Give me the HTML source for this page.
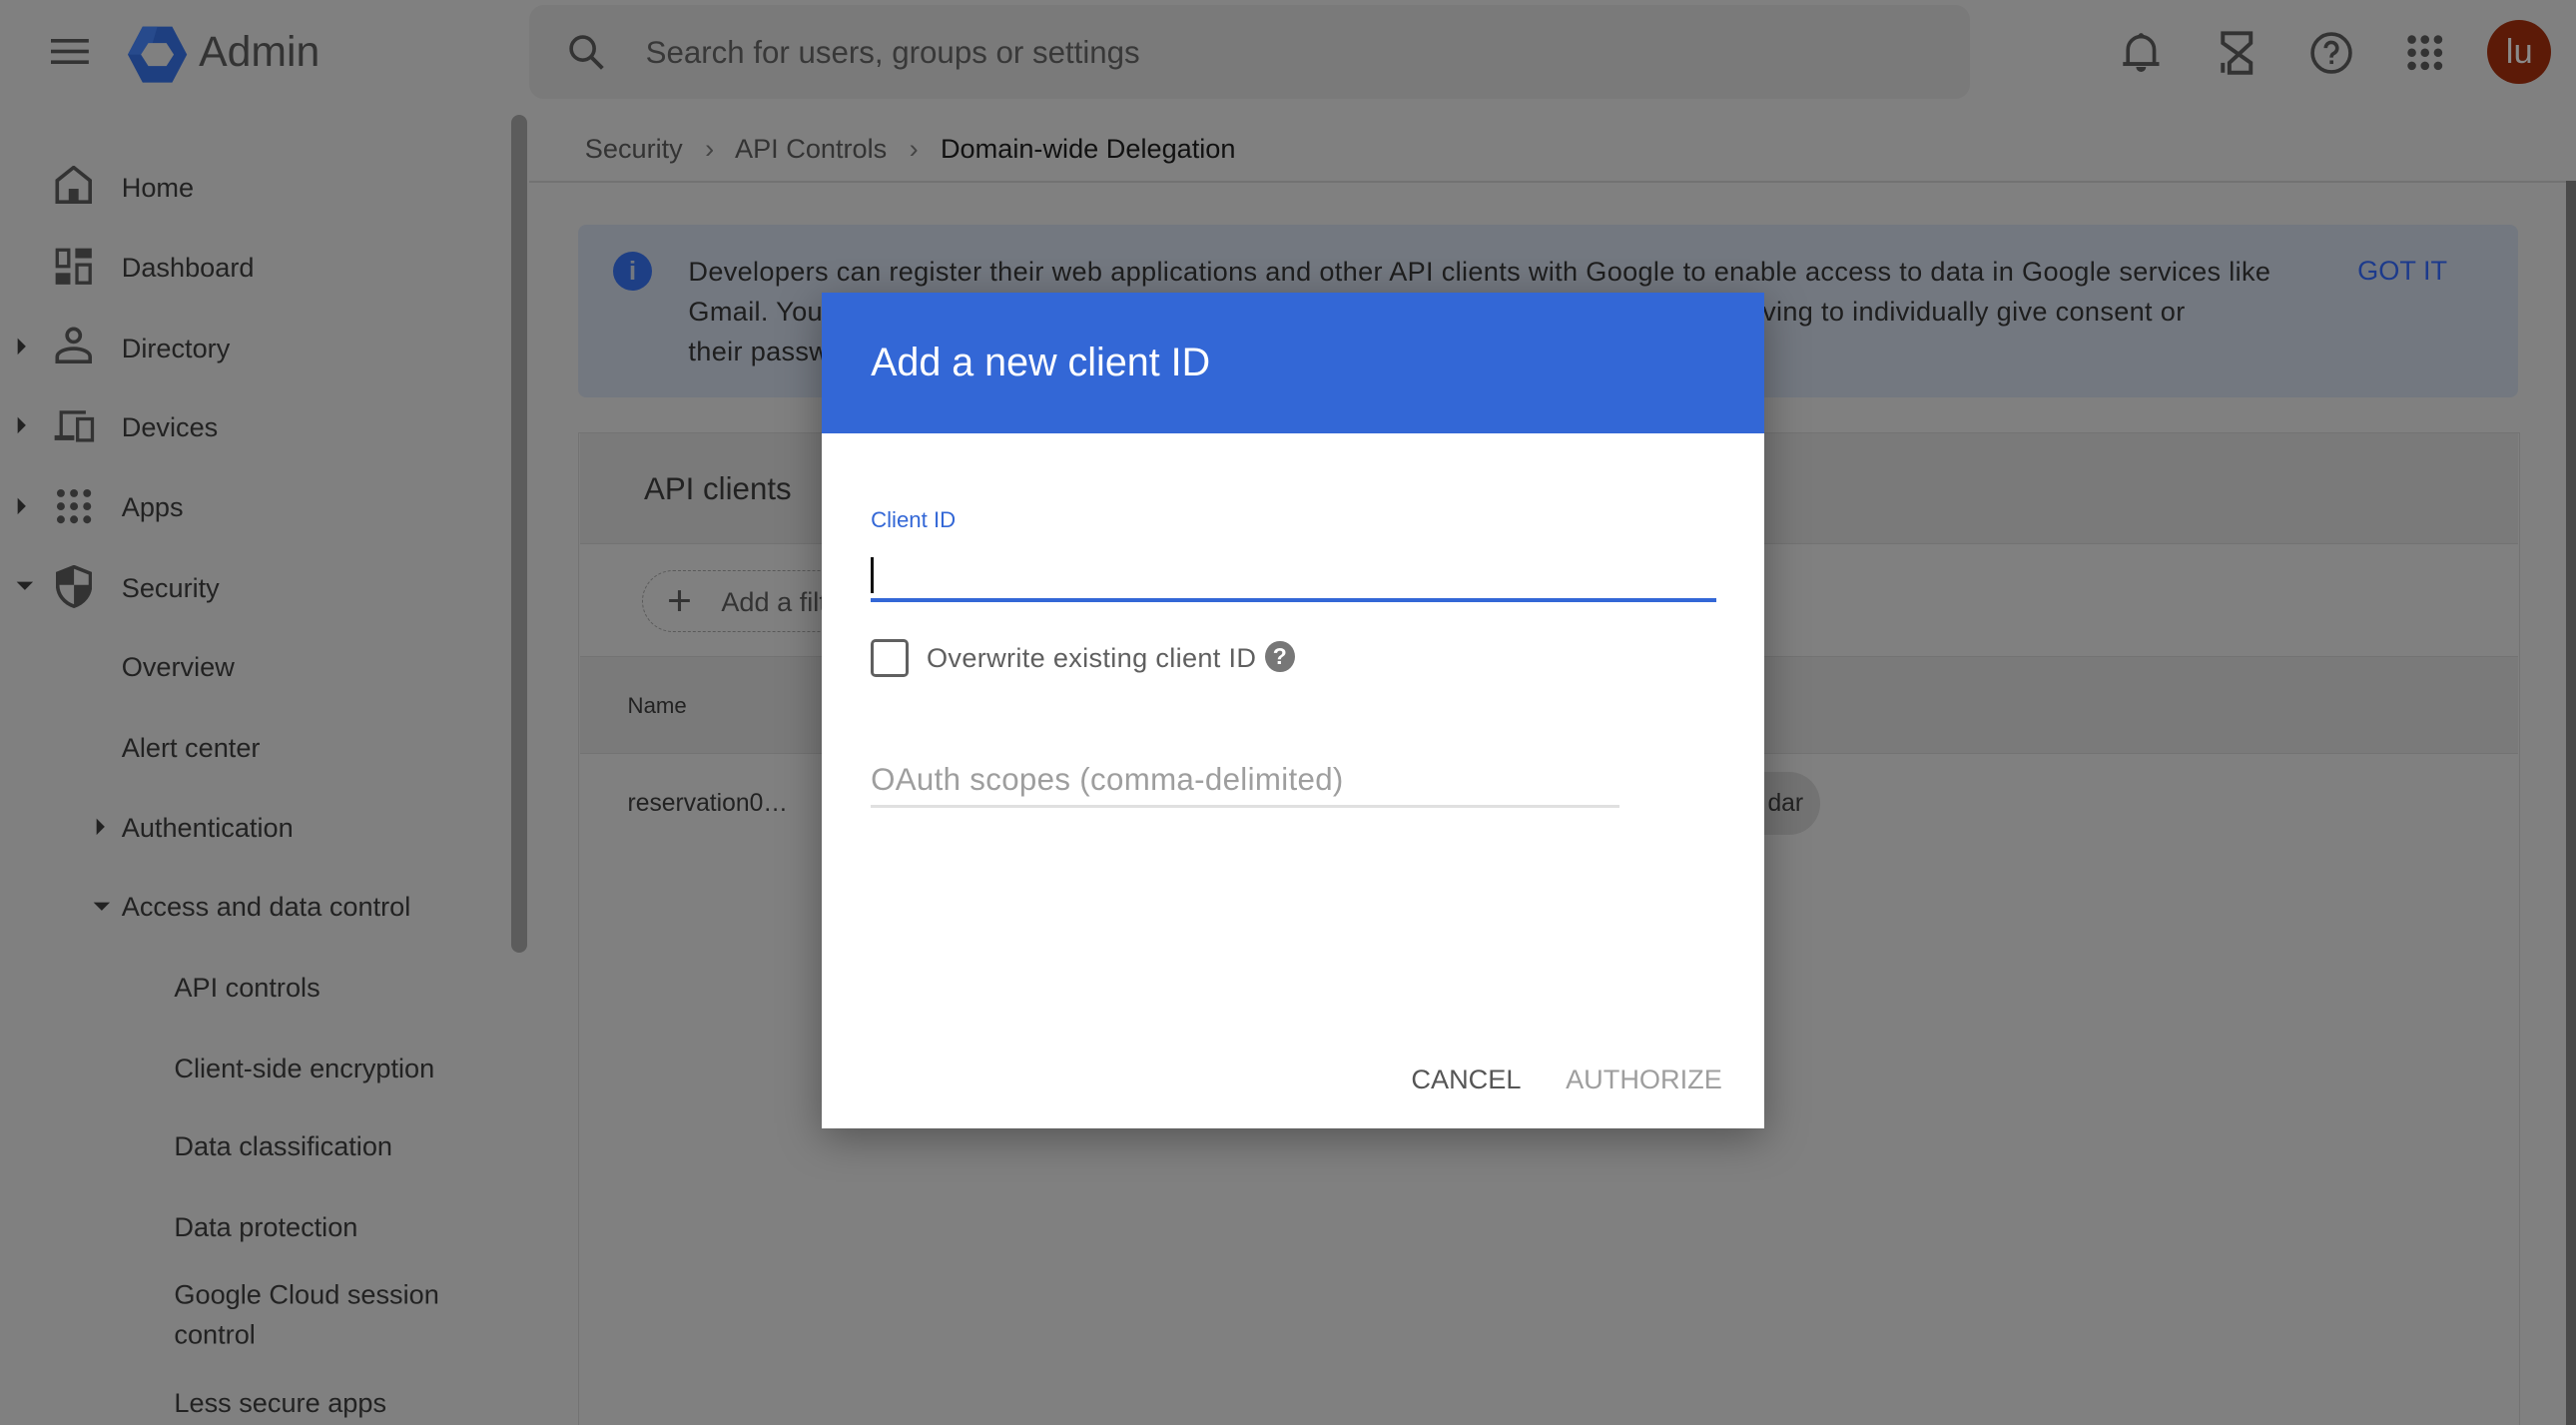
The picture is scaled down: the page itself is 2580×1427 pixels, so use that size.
<!DOCTYPE html>
<html><head><meta charset="utf-8"><style>
*{margin:0;padding:0;box-sizing:border-box}
html,body{width:2580px;height:1426px;overflow:hidden;background:#808080}
#w{position:absolute;left:0;top:0;width:1568px;height:867px;zoom:1.64541;font-family:"Liberation Sans",sans-serif;color:#2a2a2a;background:#808080;overflow:hidden}
.a{position:absolute;white-space:nowrap}
.nav{position:absolute;left:74px;font-size:16.5px;color:#222;transform:translateY(-50%)}
.sub{left:106px}
.ic{position:absolute}
</style></head><body><div id="w">
<!-- top bar -->
<svg class="ic" style="left:31px;top:24px" width="24" height="16"><rect y="0" width="23" height="2.2" fill="#333"/><rect y="6.5" width="23" height="2.2" fill="#333"/><rect y="13" width="23" height="2.2" fill="#333"/></svg>
<svg class="ic" style="left:78px;top:15px" width="36" height="36" viewBox="0 0 36 36"><polygon points="9,1 27,1 36,18 27,35 9,35 0,18" fill="#1e3f80"/><polygon points="9,1 18,1 13,18 0,18" fill="#274a8c"/><polygon points="12.5,11 23.5,11 28,18 23.5,25 12.5,25 8,18" fill="#808080"/></svg>
<div class="a" style="left:121px;top:17px;font-size:26px;color:#333">Admin</div>
<div class="a" style="left:322px;top:3px;width:877px;height:57px;background:#7a7a7a;border-radius:9px"></div>
<svg class="ic" style="left:345px;top:20px" width="24" height="24" viewBox="0 0 24 24"><circle cx="9.5" cy="9.5" r="7" fill="none" stroke="#333" stroke-width="2.2"/><line x1="14.5" y1="14.5" x2="21.5" y2="21.5" stroke="#333" stroke-width="2.4"/></svg>
<div class="a" style="left:393px;top:21px;font-size:19px;color:#383838">Search for users, groups or settings</div>
<svg class="ic" style="left:1290px;top:18px" width="26" height="28" viewBox="0 0 26 28"><path d="M5 20V12a8 8 0 0 1 16 0v8" fill="none" stroke="#333" stroke-width="2.2"/><rect x="2" y="19.5" width="22" height="2.4" fill="#333"/><circle cx="13" cy="3.5" r="1.6" fill="#333"/><path d="M10 22.5a3 3 0 0 0 6 0z" fill="#333"/></svg>
<svg class="ic" style="left:1351px;top:18px" width="22" height="28" viewBox="0 0 22 28"><path d="M2 2h17v6L6 20v6h13v-6L2 8zM2 2v6M19 20v6" fill="none" stroke="#333" stroke-width="2.4"/><path d="M2 20v6" stroke="#333" stroke-width="2.4"/></svg>
<svg class="ic" style="left:1405px;top:18px" width="28" height="28" viewBox="0 0 28 28"><circle cx="14" cy="14" r="11.5" fill="none" stroke="#333" stroke-width="2.2"/><path d="M10.5 11a3.5 3.5 0 1 1 5 3.2c-1.2.6-1.5 1.3-1.5 2.6" fill="none" stroke="#333" stroke-width="2.2"/><rect x="13" y="18.5" width="2.2" height="2.2" fill="#333"/></svg>
<svg class="ic" style="left:1464px;top:20px" width="24" height="24" viewBox="0 0 24 24" fill="#333"><circle cx="4" cy="4" r="2.6"/><circle cx="12" cy="4" r="2.6"/><circle cx="20" cy="4" r="2.6"/><circle cx="4" cy="12" r="2.6"/><circle cx="12" cy="12" r="2.6"/><circle cx="20" cy="12" r="2.6"/><circle cx="4" cy="20" r="2.6"/><circle cx="12" cy="20" r="2.6"/><circle cx="20" cy="20" r="2.6"/></svg>
<div class="a" style="left:1514px;top:12px;width:39px;height:39px;border-radius:50%;background:#5c1a07;color:#8a8a8a;font-size:21px;text-align:center;line-height:39px">lu</div>
<!-- sidebar -->
<div class="a" style="left:311px;top:70px;width:10px;height:510px;background:#5c5c5c;border-radius:5px"></div>
<svg class="ic" style="left:33px;top:101px" width="24" height="24" viewBox="0 0 24 24"><path d="M2 22V9l10-8 10 8v13z" fill="none" stroke="#333" stroke-width="2.2"/><rect x="9" y="14" width="6" height="8" fill="#333"/></svg>
<div class="nav" style="top:114px">Home</div>
<svg class="ic" style="left:33px;top:150px" width="24" height="24" viewBox="0 0 24 24" fill="#333"><path d="M1 1h9v12H1zM3 3v8h5V3z"/><rect x="13" y="1" width="10" height="6"/><rect x="1" y="16" width="9" height="7"/><path d="M13 10h10v13H13zM15 12v9h6v-9z"/></svg>
<div class="nav" style="top:163px">Dashboard</div>
<svg class="ic" style="left:10px;top:205px" width="8" height="12"><path d="M1 1l5 5-5 5z" fill="#222"/></svg>
<svg class="ic" style="left:33px;top:198px" width="24" height="24" viewBox="0 0 24 24"><circle cx="12" cy="6" r="4" fill="none" stroke="#333" stroke-width="2.2"/><path d="M2 22v-3c0-3 5-5 10-5s10 2 10 5v3z" fill="none" stroke="#333" stroke-width="2.2"/></svg>
<div class="nav" style="top:212px">Directory</div>
<svg class="ic" style="left:10px;top:253px" width="8" height="12"><path d="M1 1l5 5-5 5z" fill="#222"/></svg>
<svg class="ic" style="left:32px;top:248px" width="26" height="22" viewBox="0 0 26 22"><path d="M4 2h16v2H6v14H4z" fill="#333"/><rect x="1" y="17" width="12" height="3" fill="#333"/><rect x="15" y="7" width="9" height="13" fill="none" stroke="#333" stroke-width="2"/></svg>
<div class="nav" style="top:260px">Devices</div>
<svg class="ic" style="left:10px;top:302px" width="8" height="12"><path d="M1 1l5 5-5 5z" fill="#222"/></svg>
<svg class="ic" style="left:34px;top:297px" width="22" height="22" viewBox="0 0 22 22" fill="#333"><circle cx="3" cy="3" r="2.4"/><circle cx="11" cy="3" r="2.4"/><circle cx="19" cy="3" r="2.4"/><circle cx="3" cy="11" r="2.4"/><circle cx="11" cy="11" r="2.4"/><circle cx="19" cy="11" r="2.4"/><circle cx="3" cy="19" r="2.4"/><circle cx="11" cy="19" r="2.4"/><circle cx="19" cy="19" r="2.4"/></svg>
<div class="nav" style="top:309px">Apps</div>
<svg class="ic" style="left:9px;top:353px" width="12" height="8"><path d="M1 1h10l-5 5z" fill="#222"/></svg>
<svg class="ic" style="left:34px;top:344px" width="22" height="26" viewBox="0 0 22 26"><path d="M11 1L1 5v7c0 6 4 11 10 13 6-2 10-7 10-13V5z" fill="none" stroke="#333" stroke-width="2.2"/><path d="M11 1L1 5v7h10zM11 12h10c0 6-4 11-10 13z" fill="#333"/></svg>
<div class="nav" style="top:358px">Security</div>
<div class="nav" style="top:406px">Overview</div>
<div class="nav" style="top:455px">Alert center</div>
<svg class="ic" style="left:58px;top:497px" width="8" height="12"><path d="M1 1l5 5-5 5z" fill="#222"/></svg>
<div class="nav" style="top:504px">Authentication</div>
<svg class="ic" style="left:56px;top:548px" width="12" height="8"><path d="M1 1h10l-5 5z" fill="#222"/></svg>
<div class="nav" style="top:552px">Access and data control</div>
<div class="nav sub" style="top:601px">API controls</div>
<div class="nav sub" style="top:650px">Client-side encryption</div>
<div class="nav sub" style="top:698px">Data classification</div>
<div class="nav sub" style="top:747px">Data protection</div>
<div class="nav sub" style="top:800px;line-height:24px;white-space:normal;width:200px">Google Cloud session control</div>
<div class="nav sub" style="top:854px">Less secure apps</div>
<!-- breadcrumb -->
<div class="a" style="left:356px;top:81px;font-size:16.5px;color:#333">Security <span style="margin:0 9px;color:#444">›</span> API Controls <span style="margin:0 9px;color:#444">›</span> <span style="color:#111">Domain-wide Delegation</span></div>
<div class="a" style="left:322px;top:110px;width:1240px;height:1px;background:#727272"></div>
<div class="a" style="left:1562px;top:110px;width:6px;height:757px;background:#4a4a4a"></div>
<!-- banner -->
<div class="a" style="left:352px;top:137px;width:1181px;height:105px;background:#737880;border-radius:5px"></div>
<div class="a" style="left:373px;top:153px;width:24px;height:24px;border-radius:50%;background:#1e3f85;color:#737880;font-size:16px;font-weight:bold;text-align:center;line-height:24px">i</div>
<div class="a" style="left:419px;top:153px;font-size:16.5px;line-height:24.5px;color:#1e1e1e;letter-spacing:0.2px">Developers can register their web applications and other API clients with Google to enable access to data in Google services like<br>Gmail. You can authorize these clients to access your users' data without your users having to individually give consent or<br>their passwords.</div>
<div class="a" style="left:1435px;top:155px;font-size:16.5px;color:#1c3a8c;font-weight:500">GOT IT</div>
<!-- card -->
<div class="a" style="left:352px;top:263px;width:1182px;height:620px;border:1px solid #737373;background:#808080"></div>
<div class="a" style="left:353px;top:264px;width:1180px;height:67px;background:#7a7a7a;border-bottom:1px solid #737373"></div>
<div class="a" style="left:392px;top:287px;font-size:19px;color:#222">API clients</div>
<div class="a" style="left:353px;top:399px;width:1180px;height:60px;background:#7a7a7a;border-top:1px solid #737373;border-bottom:1px solid #737373"></div>
<div class="a" style="left:391px;top:347px;width:160px;height:38px;border:1px dashed #5a5a5a;border-radius:19px"></div>
<div class="a" style="left:406px;top:353px;font-size:26px;color:#333;line-height:26px">+</div>
<div class="a" style="left:439px;top:357px;font-size:16.5px;color:#333">Add a filter</div>
<div class="a" style="left:382px;top:422px;font-size:13.5px;color:#222;font-weight:500">Name</div>
<div class="a" style="left:382px;top:481px;font-size:15px;color:#222">reservation0…</div>
<div class="a" style="left:1000px;top:470px;width:108px;height:38px;border-radius:19px;background:#737373"></div>
<div class="a" style="left:1076px;top:481px;font-size:15px;color:#222">dar</div>
<!-- dialog -->
<div class="a" style="left:500px;top:178px;width:574px;height:509px;background:#fff;box-shadow:0 6px 24px rgba(0,0,0,.35)"></div>
<div class="a" style="left:500px;top:178px;width:574px;height:86px;background:#3367d6"></div>
<div class="a" style="left:530px;top:207px;font-size:24px;color:#fff">Add a new client ID</div>
<div class="a" style="left:530px;top:309px;font-size:13.5px;color:#3367d6">Client ID</div>
<div class="a" style="left:530px;top:339px;width:1.5px;height:22px;background:#111"></div>
<div class="a" style="left:530px;top:364px;width:515px;height:2.5px;background:#3367d6"></div>
<div class="a" style="left:530px;top:389px;width:23px;height:23px;border:2px solid #606060;border-radius:3px"></div>
<div class="a" style="left:564px;top:391px;font-size:16.5px;color:#5f5f5f;letter-spacing:0.2px">Overwrite existing client ID</div>
<div class="a" style="left:770px;top:390px;width:18px;height:19px;border-radius:50%;background:#777;color:#fff;font-size:14px;font-weight:bold;text-align:center;line-height:19px">?</div>
<div class="a" style="left:530px;top:464px;font-size:19px;color:#9e9e9e;letter-spacing:0.2px">OAuth scopes (comma-delimited)</div>
<div class="a" style="left:530px;top:490px;width:456px;height:1.5px;background:#e0e0e0"></div>
<div class="a" style="left:859px;top:647px;font-size:16.5px;color:#555;font-weight:500">CANCEL</div>
<div class="a" style="left:953px;top:647px;font-size:16.5px;color:#9e9e9e;font-weight:500">AUTHORIZE</div>
</div></body></html>
